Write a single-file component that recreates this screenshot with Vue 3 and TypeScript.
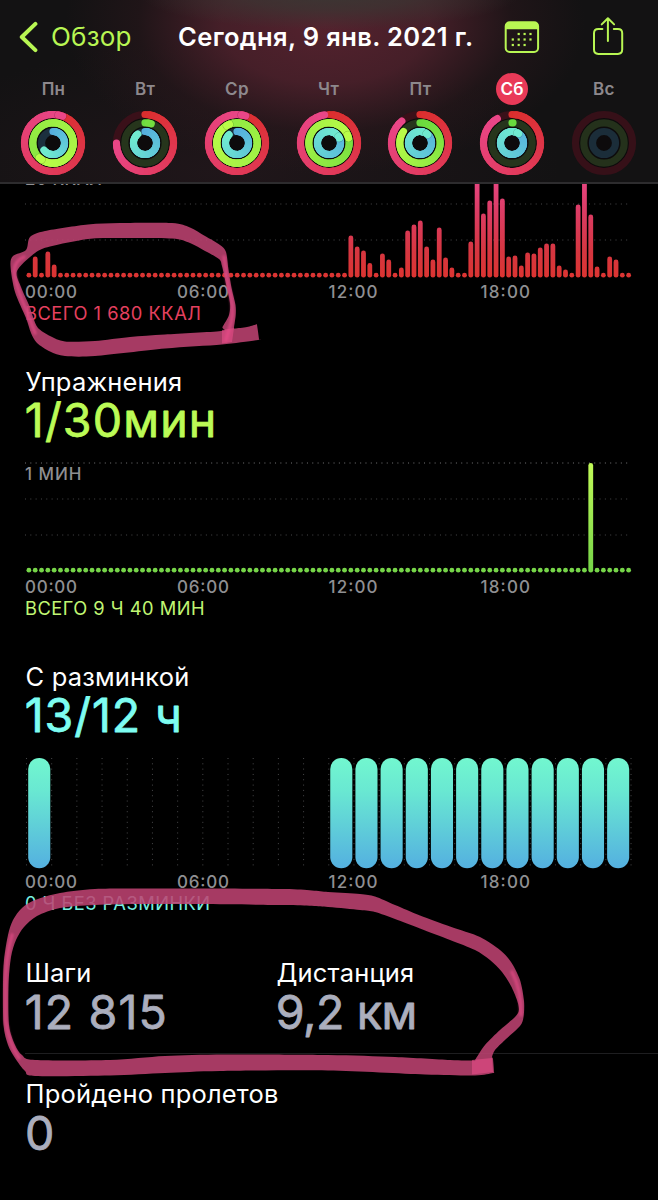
<script setup lang="ts">
type Pt = [number, number]
type Rgb = [number, number, number]

interface Day {
  name: string
  move: number
  exercise: number
  stand: number
  active?: boolean
  future?: boolean
}

const days: Day[] = [
  { name: 'Пн', move: 1.055, exercise: 1.62, stand: 0.645 },
  { name: 'Вт', move: 0.75, exercise: 0.05, stand: 0.893 },
  { name: 'Ср', move: 1.05, exercise: 1.94, stand: 0.88 },
  { name: 'Чт', move: 0.975, exercise: 1.21, stand: 1.18 },
  { name: 'Пт', move: 0.89, exercise: 0.847, stand: 1.12 },
  { name: 'Сб', move: 0.914, exercise: 0.008, stand: 1.1, active: true },
  { name: 'Вс', move: 0, exercise: 0, stand: 0, future: true },
]

const ringSpecs: { key: 'move' | 'exercise' | 'stand'; r: number; from: Rgb; to: Rgb; track: string }[] = [
  { key: 'move', r: 28.5, from: [218, 46, 44], to: [233, 70, 136], track: '#3a1019' },
  { key: 'exercise', r: 20.2, from: [104, 216, 62], to: [186, 252, 72], track: '#26351c' },
  { key: 'stand', r: 11.5, from: [84, 172, 222], to: [112, 236, 208], track: '#1c303e' },
]

const mix = (a: Rgb, b: Rgb, t: number) =>
  `rgb(${a.map((v, i) => Math.round(v + (b[i] - v) * t)).join(',')})`

const polar = (r: number, turn: number): Pt => {
  const a = turn * Math.PI * 2
  return [33 + r * Math.sin(a), 33 - r * Math.cos(a)]
}

function segments(p: number, r: number, from: Rgb, to: Rgb) {
  if (p <= 0) return []
  const n = Math.max(1, Math.ceil(p * 40))
  const reach = Math.min(1, p * 4)
  return Array.from({ length: n }, (_, i) => {
    const a = polar(r, (p * i) / n)
    const b = polar(r, (p * (i + 1)) / n)
    return {
      d: `M${a[0].toFixed(2)} ${a[1].toFixed(2)}A${r} ${r} 0 0 1 ${b[0].toFixed(2)} ${b[1].toFixed(2)}`,
      color: mix(from, to, ((i + 0.5) / n) * reach),
      shade: i === n - 1 && p > 1,
    }
  })
}

const rings = days.map((day) => ({
  ...day,
  rings: ringSpecs.map((s) => ({ ...s, segs: segments(day[s.key], s.r, s.from, s.to) })),
}))

const moveHeights: Record<number, number> = {
  1: 21, 3: 26, 4: 13, 51: 42, 52: 31, 53: 27, 54: 14.5, 56: 24, 57: 18, 59: 10,
  60: 47, 61: 53, 62: 57, 63: 31, 64: 18, 65: 50, 66: 20, 67: 10, 70: 36, 71: 106,
  72: 64, 73: 77, 74: 108, 75: 79, 76: 21, 77: 22, 78: 12, 79: 25, 80: 24, 81: 30,
  82: 34, 83: 34, 84: 12, 85: 8, 87: 73, 88: 104, 89: 63, 90: 11, 92: 21, 93: 18,
}
const exerciseHeights: Record<number, number> = { 89: 109.5 }

const makeBars = (heights: Record<number, number>) =>
  Array.from({ length: 96 }, (_, i) => {
    const h = heights[i] ?? 4.8
    return { x: 28.9 + i * 6.313 - 2.4, y: 114.6 - h, h }
  })

const charts = [
  { id: 'move', bars: makeBars(moveHeights), total: 'ВСЕГО 1 680 ККАЛ', width: 176, scale: '20 ККАЛ', scaleWidth: 77 },
  {
    id: 'exercise', title: 'Упражнения', value: '1/30мин', valueWidth: 191.5, bars: makeBars(exerciseHeights),
    total: 'ВСЕГО 9 Ч 40 МИН', width: 179.5, scale: '1 МИН', scaleWidth: 56.5,
  },
  { id: 'stand', title: 'С разминкой', value: '13/12 ч', valueWidth: 157, total: '0 Ч БЕЗ РАЗМИНКИ', width: 185 },
]
const hours = [0, 12, 13, 14, 15, 16, 17, 18, 19, 20, 21, 22, 23]
const times: [string, number, number][] = [
  ['00:00', 25, 52], ['06:00', 177, 52], ['12:00', 328.5, 49], ['18:00', 480.5, 49.5],
]

function smooth(pts: Pt[]): string {
  const n = pts.length
  let d = `M${pts[0]}`
  for (let i = 0; i < n; i++) {
    const [a, b, c, e] = [pts[(i + n - 1) % n], pts[i], pts[(i + 1) % n], pts[(i + 2) % n]]
    const k = 7
    d += `C${b[0] + (c[0] - a[0]) / k} ${b[1] + (c[1] - a[1]) / k} ${c[0] - (e[0] - b[0]) / k} ${c[1] - (e[1] - b[1]) / k} ${c[0]} ${c[1]}`
  }
  return d + 'Z'
}

const firstMark = smooth([
  [26, 250], [30, 237], [45, 231], [88, 224.5], [120, 223], [172, 223], [190, 227.5], [205, 236], [220, 245],
  [226, 252], [228.5, 270], [232, 290], [235.5, 305], [235.7, 315], [234, 328], [235, 328.5], [247, 327], [256, 324.5], [257, 325], [259, 339],
  [258, 340], [222, 344.5], [165, 348.5], [95, 356], [65, 356], [50, 351.5], [37, 343], [31, 333], [26, 318],
  [15, 292], [10.5, 266], [13, 256],
]) + smooth([
  [17, 271], [35, 253], [50, 246.5], [88, 239], [120, 238], [172, 238.5], [190, 243], [205, 251], [219, 259],
  [222, 266], [226, 284], [230, 303], [229, 315], [222.5, 327], [221, 331], [165, 334.5], [130, 337], [95, 341],
  [65, 341.5], [50, 336], [38, 328], [33, 317], [29, 305], [21, 287],
])

const secondMark = smooth([
  [3, 985], [4, 960], [8, 935], [13, 920], [22, 908], [35, 900], [60, 893], [95, 889], [150, 888.5], [285, 889],
  [328, 892], [360, 894], [375, 896.5], [395, 905], [420, 915.5], [450, 926.5], [480, 937], [500, 950], [511, 962],
  [520, 980], [524, 1001], [523.5, 1017], [520, 1026], [505, 1040], [495, 1050], [492, 1057], [493, 1059], [494, 1072], [493, 1073], [475, 1075.5],
  [425, 1074.5], [328, 1070.5], [220, 1071], [165, 1073], [110, 1075.5], [35, 1076], [25, 1071], [15, 1058],
  [8, 1045], [3.5, 1025],
]) + smooth([
  [8.5, 985], [11, 957], [16, 940], [24, 927], [37, 916], [60, 908], [95, 905], [150, 904], [285, 905], [328, 907],
  [360, 910], [375, 912], [395, 919], [420, 928.5], [450, 940], [475, 950], [490, 960], [502, 972], [511, 986],
  [517, 1000], [519, 1010], [515, 1017], [500, 1030], [485, 1045], [475, 1060], [474, 1060.5], [450, 1060], [395, 1057], [328, 1055],
  [225, 1054.5], [165, 1056], [110, 1060], [35, 1060], [22, 1055], [15, 1045], [9, 1025],
])
</script>

<template>
  <div class="screen">
    <header class="header">
      <nav class="nav">
        <button class="back">
          <svg width="20" height="32" viewBox="0 0 20 32"><path d="M16.4 2.9 2.8 16 16.4 29.1" /></svg>
          <span>Обзор</span>
        </button>
        <h1>Сегодня, 9 янв. 2021 г.</h1>
        <svg class="calendar" width="36" height="34" viewBox="504 20 36 34">
          <rect x="505.7" y="22.3" width="32.4" height="29.6" rx="4" class="line" />
          <path d="M505.7 29.3V26q0-3.7 4-3.7h24.4q4 0 4 3.7v3.3z" class="solid" />
          <g class="solid">
            <rect v-for="c in [1, 2, 3]" :key="'a' + c" :x="511.7 + c * 5.9" y="32.9" width="2.2" height="2.2" />
            <rect v-for="c in [0, 1, 2, 3]" :key="'b' + c" :x="511.7 + c * 5.9" y="38.4" width="2.2" height="2.2" />
            <rect v-for="c in [0, 1, 2]" :key="'c' + c" :x="511.7 + c * 5.9" y="43.9" width="2.2" height="2.2" />
          </g>
        </svg>
        <svg class="share" width="34" height="40" viewBox="591 16 34 40">
          <path d="M602.4 29h-4.1q-4.3 0-4.3 4.3V49.6q0 4.3 4.3 4.3h19.6q4.3 0 4.3-4.3V33.3q0-4.3-4.3-4.3h-4.1M607.9 41V18.5M601.7 24.4l6.2-6.2 6.2 6.2" />
        </svg>
      </nav>
      <div class="week">
        <div v-for="d in rings" :key="d.name" class="day">
          <span class="name" :class="{ active: d.active }">{{ d.name }}</span>
          <svg width="66" height="66" viewBox="0 0 66 66" :class="{ future: d.future }">
            <circle cx="33" cy="33" r="25" class="disc" />
            <g v-for="r in d.rings" :key="r.key" class="ring">
              <circle cx="33" cy="33" :r="r.r" :stroke="r.track" />
              <template v-for="(s, i) in r.segs" :key="i">
                <path v-if="s.shade" :d="s.d" class="shade" />
                <path :d="s.d" :stroke="s.color" />
              </template>
            </g>
          </svg>
        </div>
      </div>
    </header>

    <main class="content">
      <section v-for="c in charts" :key="c.id" :class="c.id">
        <h2 v-if="c.title">{{ c.title }}</h2>
        <svg v-if="c.value" class="value" width="400" height="60.2">
          <text x="24.8" y="39.4" :textLength="c.valueWidth">{{ c.value }}</text>
        </svg>
        <svg class="chart" width="658" height="160" viewBox="0 -5 658 160">
          <defs>
            <linearGradient id="g-move" gradientUnits="userSpaceOnUse" x1="0" y1="5" x2="0" y2="110">
              <stop offset="0" stop-color="#ea4888" /><stop offset=".35" stop-color="#dc3c66" />
              <stop offset=".75" stop-color="#d63640" /><stop offset="1" stop-color="#dc3431" />
            </linearGradient>
            <linearGradient id="g-exercise" gradientUnits="userSpaceOnUse" x1="0" y1="0" x2="0" y2="110">
              <stop offset="0" stop-color="#c2fb58" /><stop offset="1" stop-color="#74d448" />
            </linearGradient>
            <linearGradient id="g-stand" x1="0" y1="0" x2="0" y2="1">
              <stop offset="0" stop-color="#72f7cf" /><stop offset=".3" stop-color="#69e8d2" />
              <stop offset="1" stop-color="#54b0e0" />
            </linearGradient>
          </defs>
          <template v-if="c.bars">
            <path class="grid top" d="M25 0H631" />
            <path class="grid" d="M25 36H631M25 72H631" />
            <text class="axis" x="25" y="17.3" :textLength="c.scaleWidth">{{ c.scale }}</text>
            <rect v-for="(b, i) in c.bars" :key="i" :x="b.x" :y="b.y - 5" width="4.8" :height="b.h" rx="2.4" :fill="`url(#g-${c.id})`" />
          </template>
          <template v-else>
            <path v-for="i in 25" :key="i" class="grid" :d="`M${1.3 + i * 25.19} 0V110`" />
            <rect v-for="h in hours" :key="h" :x="28.2 + h * 25.17" y="0" width="22.1" height="110.3" rx="11" fill="url(#g-stand)" />
          </template>
          <text v-for="t in times" :key="t[0]" class="axis" :x="t[1]" y="130" :textLength="t[2]">{{ t[0] }}</text>
          <text class="total" x="25" y="152.4" :textLength="c.width">{{ c.total }}</text>
        </svg>
      </section>

      <div class="stats">
        <div class="stat">
          <h2>Шаги</h2>
          <svg class="value" width="250" height="65.5"><text x="24.8" y="40" textLength="142">12 815</text></svg>
        </div>
        <div class="stat">
          <h2>Дистанция</h2>
          <svg class="value" width="250" height="65.5"><text x="24.8" y="40" textLength="141.5">9,2 км</text></svg>
        </div>
      </div>
      <div class="stat floors">
        <h2>Пройдено пролетов</h2>
        <svg class="value" width="250" height="60"><text x="25" y="39.6">0</text></svg>
      </div>
    </main>

    <svg class="marks" width="658" height="1200" viewBox="0 0 658 1200">
      <defs><filter id="soft" x="-20%" y="-20%" width="140%" height="140%"><feGaussianBlur stdDeviation="1" /></filter></defs>
      <path class="ink" :d="firstMark" />
      <path class="ink" :d="secondMark" />
      <g class="bright" filter="url(#soft)">
        <path d="M24 257Q12 262 15 277T28 314L35 333" />
        <path d="M224 257L228 285Q235 307 231 323L226 340" />
        <path d="M12 935Q5 960 5.500 990V1020Q9 1044 19 1058" />
        <path d="M512 972Q521.500 990 521 1015" />
      </g>
      <path class="overlap" d="M222 330L234 328 232 342 222 343.500ZM472 1060L492 1058 493 1072 472 1074.500Z" />
    </svg>
  </div>
</template>

<style>
body {
  margin: 0;
  background: #000;
}
</style>

<style scoped>
.screen {
  position: relative;
  width: 658px;
  height: 1200px;
  overflow: hidden;
  background: #000;
  color: #fff;
  font-family: Inter, 'Liberation Sans', sans-serif;
}
svg {
  display: block;
}
.header {
  box-sizing: border-box;
  height: 184px;
  border-bottom: 2px solid #2d2c2e;
  background:
    radial-gradient(ellipse 190px 36px at 330px -6px, #3b3633 0%, rgba(59, 54, 51, 0.7) 45%, transparent 100%),
    radial-gradient(ellipse 260px 150px at 325px 24px, #54222e 0%, rgba(78, 33, 44, 0.85) 40%, rgba(50, 25, 31, 0.4) 72%, transparent 100%),
    radial-gradient(ellipse 330px 130px at 230px 170px, #20161a 0%, transparent 100%),
    #131213;
}
.nav {
  display: flex;
  align-items: center;
  height: 74px;
}
.back {
  display: flex;
  align-items: center;
  width: 178px;
  padding: 0 0 0 19px;
  gap: 12px;
  border: 0;
  background: none;
  color: #b8f653;
  font: 400 26px/32px Inter, sans-serif;
  letter-spacing: 0.2px;
  box-sizing: border-box;
}
.back path {
  fill: none;
  stroke: #b8f653;
  stroke-width: 4;
  stroke-linecap: round;
  stroke-linejoin: round;
}
h1 {
  width: 326px;
  margin: 0;
  font-size: 25.5px;
  font-weight: 600;
  line-height: 32px;
  letter-spacing: 0.4px;
  white-space: nowrap;
}
.calendar .line,
.share path {
  fill: none;
  stroke: #b8f653;
  stroke-width: 2;
  stroke-linecap: round;
  stroke-linejoin: round;
}
.solid {
  fill: #b8f653;
}
.share {
  margin-left: 51px;
  margin-bottom: 2px;
}
.week {
  display: grid;
  grid-template-columns: repeat(7, 91.75px);
  padding-left: 7.6px;
}
.day {
  display: flex;
  flex-direction: column;
  align-items: center;
}
.name {
  width: 32px;
  height: 32px;
  margin: -1px 0 5.3px;
  border-radius: 50%;
  color: #8d888c;
  font-size: 17px;
  font-weight: 600;
  line-height: 33px;
  letter-spacing: 0.3px;
  text-align: center;
}
.name.active {
  background: #e93a58;
  color: #fff;
}
.disc {
  fill: #0d0b0c;
}
.ring circle,
.ring path {
  fill: none;
  stroke-width: 7.2;
  stroke-linecap: round;
}
.ring .shade {
  stroke: rgba(0, 0, 0, 0.25);
  stroke-width: 8;
}
.future {
  opacity: 0.9;
}
.content {
  height: 1016px;
  overflow: hidden;
}
.content > section:first-child {
  margin-top: -21.5px;
}
.exercise,
.stand {
  padding-top: 43.3px;
}
h2 {
  margin: 0;
  padding-left: 25.5px;
  font-size: 25.5px;
  font-weight: 400;
  line-height: 32px;
  letter-spacing: 0.18px;
  white-space: nowrap;
}
.value {
  overflow: visible;
}
.value text {
  fill: #abaebd;
  stroke: #abaebd;
  stroke-width: 0.8px;
  stroke-linejoin: round;
  font-size: 46.5px;
}
.exercise .value text {
  fill: #bbfb56;
  stroke: #bbfb56;
}
.stand .value text {
  fill: #7dfdf1;
  stroke: #7dfdf1;
}
.grid {
  fill: none;
  stroke: #48484a;
  stroke-width: 1;
  stroke-dasharray: 1 4.32;
}
.grid.top {
  stroke: #757577;
}
.axis {
  fill: #8f8f92;
  font-size: 17px;
  font-weight: 500;
}
.total {
  font-size: 18.3px;
}
.move .total {
  fill: #e5405f;
}
.exercise .total {
  fill: #c0f673;
}
.stand .total {
  fill: #78f0e0;
}
.stats {
  display: flex;
  padding-top: 43.2px;
  position: relative;
}
.stats::after {
  content: '';
  position: absolute;
  left: 25px;
  right: 0;
  bottom: 0;
  height: 1px;
  background: #1e1e20;
}
.stat {
  width: 251px;
}
.floors {
  padding-top: 24px;
}
.marks {
  position: absolute;
  inset: 0;
  pointer-events: none;
}
.ink {
  fill: #bf4372;
  fill-opacity: 0.87;
  fill-rule: evenodd;
}
.bright path {
  fill: none;
  stroke: #e84c88;
  stroke-opacity: 0.65;
  stroke-width: 3.5;
  stroke-linecap: round;
}
.overlap {
  fill: #e84c88;
  fill-opacity: 0.6;
}
</style>
